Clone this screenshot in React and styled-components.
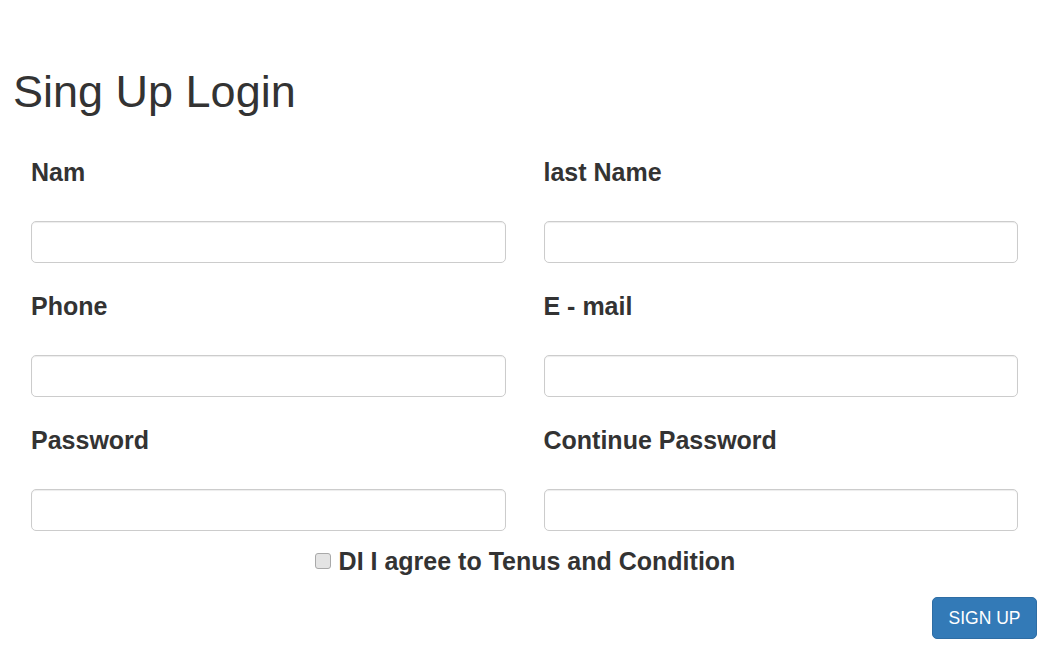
// Imports
import React from "react";
import styled, { createGlobalStyle } from "styled-components";

// Fields
const fields = [
	{ id: "name", label: "Nam", type: "text" },
	{ id: "lastName", label: "last Name", type: "text" },
	{ id: "phone", label: "Phone", type: "tel" },
	{ id: "email", label: "E - mail", type: "email" },
	{ id: "password", label: "Password", type: "password" },
	{ id: "confirm", label: "Continue Password", type: "password" },
];

// Component
const App = () => {

	// Return
	return(
		<Page>
			<GlobalStyle/>

			{/* Title */}
			<Title>Sing Up Login</Title>
			{/* Title */}

			{/* Form */}
			<Form onSubmit={ (e) => e.preventDefault() }>
				<Grid>
					{ fields.map((f) => (
						<Field key={ f.id }>
							<Label htmlFor={ f.id }>{ f.label }</Label>
							<Input id={ f.id } type={ f.type }/>
						</Field>
					)) }
				</Grid>

				<Agree>
					<Check type="checkbox" id="agree"/>
					<label htmlFor="agree">DI I agree to Tenus and Condition</label>
				</Agree>

				<Actions>
					<Button type="submit">SIGN UP</Button>
				</Actions>
			</Form>
			{/* Form */}

		</Page>
	);

};

// Styled
const GlobalStyle = createGlobalStyle`
	html, body{
		margin: 0;
		padding: 0;
		background-color: #fff;
	}
	body{
		font-family: "Liberation Sans", Arial, sans-serif;
		color: #333;
	}
	*{
		box-sizing: border-box;
	}
`;

const Page = styled.div`
	width: 1050px;
	min-height: 672px;
	padding: 67px 13px 0 13px;
`;

const Title = styled.h1`
	margin: 0;
	font-size: 45px;
	font-weight: 400;
	line-height: 50px;
	color: #333;
`;

const Form = styled.form`
	margin-top: 40px;
`;

const Grid = styled.div`
	display: grid;
	grid-template-columns: 1fr 1fr;
	column-gap: 38px;
	row-gap: 28px;
	padding: 0 19px 0 18px;
`;

const Field = styled.div`
	display: flex;
	flex-direction: column;
`;

const Label = styled.label`
	display: block;
	margin: 0 0 34px 0;
	font-size: 25px;
	font-weight: 700;
	line-height: 30px;
	color: #333;
`;

const Input = styled.input`
	display: block;
	width: 100%;
	height: 42px;
	padding: 7px 15px;
	font-family: "Liberation Sans", Arial, sans-serif;
	font-size: 17px;
	color: #555;
	background-color: #fff;
	border: 1px solid #ccc;
	border-radius: 5px;
	box-shadow: inset 0 1px 1px rgba(0,0,0,0.075);
	outline: none;
`;

const Agree = styled.div`
	display: flex;
	align-items: center;
	justify-content: center;
	gap: 8px;
	margin-top: 15px;
	font-size: 25px;
	font-weight: 700;
	line-height: 30px;
	color: #333;
	label{
		cursor: pointer;
	}
`;

const Check = styled.input`
	appearance: none;
	width: 16px;
	height: 16px;
	margin: 0;
	background-color: #e4e4e4;
	border: 1px solid #a9a9a9;
	border-radius: 3px;
	cursor: pointer;
	&:checked{
		background-color: #337ab7;
		border-color: #2e6da4;
	}
`;

const Actions = styled.div`
	display: flex;
	justify-content: flex-end;
	margin-top: 21px;
`;

const Button = styled.button`
	width: 105px;
	height: 42px;
	padding: 0;
	font-family: "Liberation Sans", Arial, sans-serif;
	font-size: 17.5px;
	color: #fff;
	background-color: #337ab7;
	border: 1px solid #2e6da4;
	border-radius: 5px;
	cursor: pointer;
`;

// Export
export default App;
